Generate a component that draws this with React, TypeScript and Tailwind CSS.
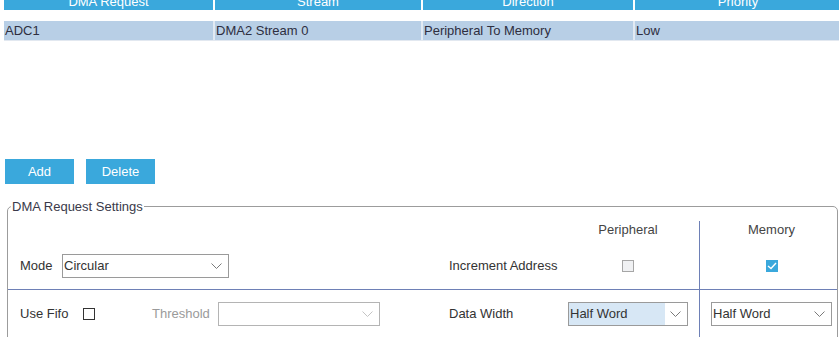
const columns = [
  { title: 'DMA Request', width: 'w-[209px]' },
  { title: 'Stream', width: 'w-[206px]' },
  { title: 'Direction', width: 'w-[210px]' },
  { title: 'Priority', width: 'w-[206px]' },
];

const row = ['ADC1', 'DMA2 Stream 0', 'Peripheral To Memory', 'Low'];

const Chevron = ({ color = '#777' }: { color?: string }) => (
  <svg width="11" height="6" viewBox="0 0 11 6" className="shrink-0">
    <polyline points="0.5,0.5 5.5,5.5 10.5,0.5" fill="none" stroke={color} strokeWidth="1" />
  </svg>
);

const Select = ({
  value,
  width,
  disabled = false,
  highlight = false,
}: {
  value: string;
  width: string;
  disabled?: boolean;
  highlight?: boolean;
}) => (
  <div
    className={`${width} h-[24px] flex items-stretch border ${
      disabled ? 'border-[#b4b4b4]' : 'border-[#9a9a9a]'
    } bg-white`}
  >
    <div
      className={`flex-1 flex items-center pl-[1px] ${highlight ? 'bg-[#d7e7f5]' : ''} text-[#333]`}
    >
      {value}
    </div>
    <div className="w-[22px] flex items-center justify-center pr-[2px]">
      <Chevron color={disabled ? '#c4c4c4' : '#7a7a7a'} />
    </div>
  </div>
);

const App = () => {
  return (
    <div className="w-[839px] h-[337px] overflow-hidden bg-white font-['Liberation_Sans',Arial,sans-serif] text-[13px] text-[#333]">
      {/* table, scrolled so the header is partly out of view */}
      <div className="ml-[4px]">
        <div className="flex gap-[2px] h-[10px]">
          {columns.map((c) => (
            <div key={c.title} className={`${c.width} shrink-0 h-[10px] overflow-hidden bg-[#3aa8dc]`}>
              <div className="-mt-[6px] leading-[16px] text-center text-white">{c.title}</div>
            </div>
          ))}
        </div>
        <div className="mt-[11px] flex gap-[2px] bg-[#e2eaf3] border-b border-[#e2e8f0]">
          {row.map((v, i) => (
            <div
              key={v}
              className={`${columns[i].width} shrink-0 h-[19px] leading-[19px] pl-[1px] bg-[#b8cfe6] text-[#2e2e40]`}
            >
              {v}
            </div>
          ))}
        </div>
      </div>

      {/* buttons */}
      <div className="mt-[118px] ml-[5px] flex gap-[12px]">
        <button className="w-[69px] h-[25px] pt-[1px] bg-[#3aa8dc] text-white">Add</button>
        <button className="w-[69px] h-[25px] pt-[1px] bg-[#3aa8dc] text-white">Delete</button>
      </div>

      {/* settings */}
      <fieldset className="mt-[15px] ml-[7px] mr-[1px] border border-[#9c9c9c] rounded-[5px]">
        <legend className="ml-[3px] px-[1px] leading-[15px] text-[#3a3a4a]">DMA Request Settings</legend>
        <div className="flex">
          <div className="w-[691px] shrink-0">
            <div className="h-[28px] flex pl-[12px] pt-[8px] leading-[16px]">
              <div className="w-[548px]" />
              <div className="w-[120px] text-center text-[#444]">Peripheral</div>
            </div>
            <div className="h-[48px] border-b border-[#6e80b6] flex items-center pl-[12px]">
              <div className="w-[42px]">Mode</div>
              <Select value="Circular" width="w-[167px]" />
              <div className="w-[220px]" />
              <div className="w-[119px]">Increment Address</div>
              <div className="w-[120px] flex justify-center">
                <div className="w-[12px] h-[12px] border border-[#a6a6a6] bg-[#f0f1f3]" />
              </div>
            </div>
            <div className="h-[47px] mb-[10px] flex items-center pl-[12px]">
              <div className="w-[63px]">Use Fifo</div>
              <div className="w-[12px] h-[12px] border border-[#333] bg-white" />
              <div className="w-[57px]" />
              <div className="w-[66px] text-[#9a9a9a]">Threshold</div>
              <Select value="" width="w-[162px]" disabled />
              <div className="w-[69px]" />
              <div className="w-[119px]">Data Width</div>
              <Select value="Half Word" width="w-[120px]" highlight />
            </div>
          </div>
          <div className="flex-1 mt-[7px] border-l border-[#6e80b6]">
            <div className="h-[21px] pt-[1px] leading-[16px] pl-[11px]">
              <div className="w-[121px] text-center text-[#444]">Memory</div>
            </div>
            <div className="h-[48px] border-b border-[#6e80b6] flex items-center pl-[11px]">
              <div className="w-[121px] flex justify-center">
                <div className="w-[12px] h-[12px] bg-[#3aa8dc] flex items-center justify-center">
                  <svg width="10" height="8" viewBox="0 0 10 8">
                    <polyline points="1,4 4,6.5 9,1" fill="none" stroke="white" strokeWidth="1.4" />
                  </svg>
                </div>
              </div>
            </div>
            <div className="h-[47px] flex items-center pl-[11px]">
              <Select value="Half Word" width="w-[121px]" />
            </div>
          </div>
        </div>
      </fieldset>
    </div>
  );
};

export default App;
